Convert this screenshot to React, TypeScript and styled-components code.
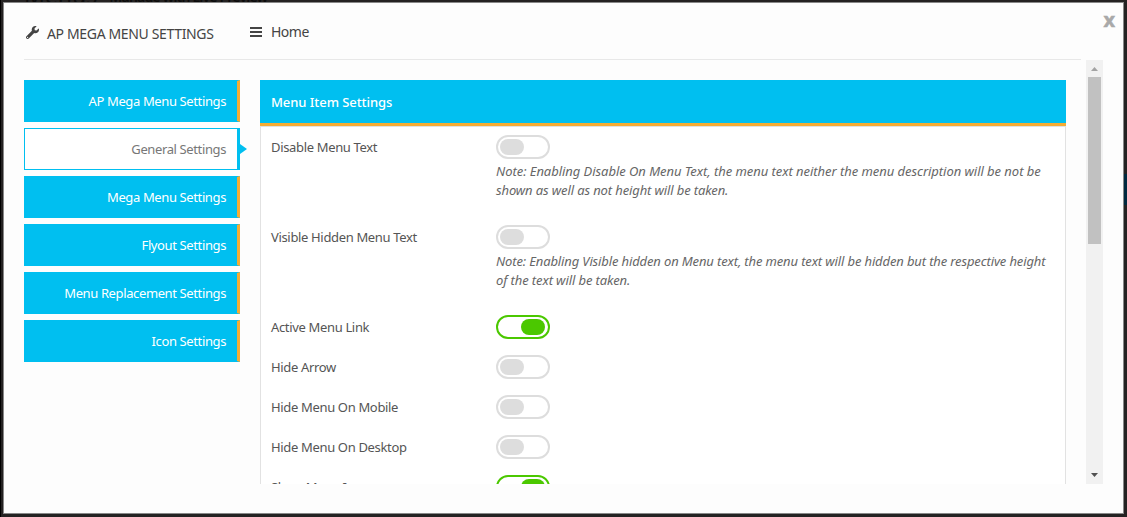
import React from 'react';
import styled, { createGlobalStyle } from 'styled-components';
import { FaWrench } from 'react-icons/fa';

const GlobalStyle = createGlobalStyle`
  * { box-sizing: border-box; }
  body { margin: 0; background: #222; font: 13px/20px "Noto Sans", "Open Sans", sans-serif; }
`;

const Page = styled.div`
  position: relative;
  width: 1127px;
  height: 517px;
  padding: 2px 3px 3px 2px;
  overflow: hidden;
  background: #242222;
  border-left: 1px solid #000;
`;

const Backdrop = styled.div`
  position: absolute;
  top: -14px;
  left: 23px;
  display: flex;
  align-items: flex-end;
  gap: 12px;
  height: 21px;
  color: #0b0b0b;
  white-space: nowrap;
`;
const BackdropTitle = styled.span`
  font-size: 23px;
  line-height: 24px;
`;
const BackdropTab = styled.span`
  font-size: 14px;
  font-weight: 600;
  letter-spacing: -0.8px;
`;
const BackdropButton = styled.div`
  position: absolute;
  top: 174px;
  right: 0;
  width: 4px;
  height: 31px;
  background: #00293f;
`;
const BackdropLink = styled.div`
  position: absolute;
  top: 318px;
  left: -1px;
  width: 1px;
  height: 35px;
  border: solid #002538;
  border-width: 10px 0;
  background: #222;
`;

const Modal = styled.main`
  position: relative;
  display: flex;
  flex-direction: column;
  width: 1121px;
  height: 512px;
  padding: 0 20px 29px;
  background: #fdfdfd;
  border: 1px solid #888;
`;

const Header = styled.header`
  display: flex;
  align-items: flex-start;
  width: 1057px;
  height: 57px;
  padding-top: 19px;
  border-bottom: 1px solid #e8e8e8;
  color: #444;
`;
const Title = styled.h1`
  display: flex;
  align-items: center;
  gap: 8px;
  width: 224px;
  margin: 2px 0 0 2px;
  font: 400 14px/20px "Noto Sans", sans-serif;
  white-space: nowrap;
  svg { margin-top: -4px; }
`;
const TitleText = styled.span`
  letter-spacing: -0.35px;
`;
const Crumb = styled.div`
  display: flex;
  align-items: center;
  gap: 9px;
  font-size: 14px;
  letter-spacing: -0.5px;
`;

const Close = styled.button`
  position: absolute;
  top: 5px;
  right: 8px;
  padding: 0;
  border: 0;
  background: none;
  color: #a9a9a9;
  font: 700 20px/24px "Noto Sans", sans-serif;
  -webkit-text-stroke: 0.5px #a9a9a9;
`;

const Body = styled.div`
  display: flex;
  width: 1079px;
  height: 424px;
  overflow: hidden;
`;

const Sidebar = styled.nav`
  display: flex;
  flex-direction: column;
  gap: 6px;
  flex: 0 0 216px;
  padding-top: 20px;
`;
const NavItem = styled.a<{ $active?: boolean }>`
  position: relative;
  height: 42px;
  padding-right: 11px;
  border: 1px solid #00bff0;
  border-right: 3px solid ${(p) => (p.$active ? '#00bff0' : '#f6ac33')};
  background: ${(p) => (p.$active ? '#fff' : '#00bff0')};
  color: ${(p) => (p.$active ? '#777' : '#fff')};
  line-height: 40px;
  letter-spacing: -0.38px;
  text-align: right;
  ${(p) =>
    p.$active &&
    `&::after {
      content: '';
      position: absolute;
      left: 100%;
      top: 15px;
      margin-left: 3px;
      border: 5.5px solid transparent;
      border-left: 7px solid #00bff0;
      border-right: 0;
    }`}
`;

const Content = styled.section`
  flex: 0 0 806px;
  margin: 20px 20px 0;
`;
const PanelTitle = styled.h2`
  height: 46px;
  margin: 0;
  padding-left: 11px;
  border-bottom: 3px solid #f6ac33;
  background: #00bff0;
  color: #fff;
  font: 500 13px/44px "Noto Sans", sans-serif;
  letter-spacing: -0.06px;
`;
const Panel = styled.div`
  height: 400px;
  border: 1px solid #e2e2e2;
  background: #fff;
  padding: 8px 10px;
`;
const Row = styled.div<{ $tall?: boolean }>`
  display: flex;
  height: ${(p) => (p.$tall ? 90 : 40)}px;
  color: #555;
`;
const Label = styled.span`
  flex: 0 0 225px;
  padding-top: 2px;
  letter-spacing: -0.34px;
`;
const Switch = styled.span<{ $on?: boolean }>`
  display: flex;
  justify-content: ${(p) => (p.$on ? 'flex-end' : 'flex-start')};
  width: 54px;
  height: 24px;
  padding: 2px 3px 2px 2px;
  border: 2px solid ${(p) => (p.$on ? '#4bc800' : '#ddd')};
  border-radius: 12px;
  background: #fff;
  &::before {
    content: '';
    width: 24px;
    height: 16px;
    border-radius: 8px;
    background: ${(p) => (p.$on ? '#4bc800' : '#ddd')};
  }
`;
const Note = styled.em`
  display: block;
  margin-top: 3px;
  color: #666;
  line-height: 19px;
`;
const NoteLine = styled.span<{ $spacing: number }>`
  display: block;
  letter-spacing: ${(p) => p.$spacing}px;
  white-space: nowrap;
`;

const Scrollbar = styled.div`
  display: flex;
  flex-direction: column;
  align-items: center;
  flex: 0 0 17px;
  height: 424px;
  background: #f1f1f1;
`;
const ScrollArrow = styled.svg`
  width: 17px;
  height: 17px;
`;
const Thumb = styled.div`
  width: 13px;
  height: 167px;
  margin-bottom: auto;
  background: #c1c1c1;
`;

const sections = ['AP Mega Menu Settings', 'General Settings', 'Mega Menu Settings', 'Flyout Settings', 'Menu Replacement Settings', 'Icon Settings'];

type Option = { label: string; on?: boolean; note?: { text: string; spacing: number }[] };

const options: Option[] = [
  {
    label: 'Disable Menu Text',
    note: [
      { text: 'Note: Enabling Disable On Menu Text, the menu text neither the menu description will be not be', spacing: -0.045 },
      { text: 'shown as well as not height will be taken.', spacing: -0.12 },
    ],
  },
  {
    label: 'Visible Hidden Menu Text',
    note: [
      { text: 'Note: Enabling Visible hidden on Menu text, the menu text will be hidden but the respective height', spacing: -0.13 },
      { text: 'of the text will be taken.', spacing: -0.1 },
    ],
  },
  { label: 'Active Menu Link', on: true },
  { label: 'Hide Arrow' },
  { label: 'Hide Menu On Mobile' },
  { label: 'Hide Menu On Desktop' },
  { label: 'Show Menu Icon', on: true },
];

export default function App() {
  return (
    <>
      <GlobalStyle />
      <Page>
        <Backdrop>
          <BackdropTitle>Menus</BackdropTitle>
          <BackdropTab>Manage with Live Preview</BackdropTab>
        </Backdrop>
        <BackdropButton />
        <BackdropLink />
        <Modal>
          <Header>
            <Title><FaWrench size={13} /><TitleText>AP MEGA MENU SETTINGS</TitleText></Title>
            <Crumb>
              <svg width="12" height="12" viewBox="0 0 12 12" fill="currentColor">
                <path d="M0 1h12v2H0zM0 5h12v2H0zM0 9h12v2H0z" />
              </svg>
              Home
            </Crumb>
          </Header>
          <Close>x</Close>
          <Body>
            <Sidebar>
              {sections.map((s) => <NavItem key={s} $active={s === 'General Settings'}>{s}</NavItem>)}
            </Sidebar>
            <Content>
              <PanelTitle>Menu Item Settings</PanelTitle>
              <Panel>
                {options.map((o) => (
                  <Row key={o.label} $tall={!!o.note}>
                    <Label>{o.label}</Label>
                    <div>
                      <Switch $on={o.on} />
                      {o.note && (
                        <Note>
                          {o.note.map((n) => <NoteLine key={n.text} $spacing={n.spacing}>{n.text}</NoteLine>)}
                        </Note>
                      )}
                    </div>
                  </Row>
                ))}
              </Panel>
            </Content>
            <Scrollbar>
              <ScrollArrow viewBox="0 0 17 17"><path d="M5 11L8.5 7L12 11Z" fill="#a3a3a3" /></ScrollArrow>
              <Thumb />
              <ScrollArrow viewBox="0 0 17 17"><path d="M5 6H12L8.5 10Z" fill="#505050" /></ScrollArrow>
            </Scrollbar>
          </Body>
        </Modal>
      </Page>
    </>
  );
}
